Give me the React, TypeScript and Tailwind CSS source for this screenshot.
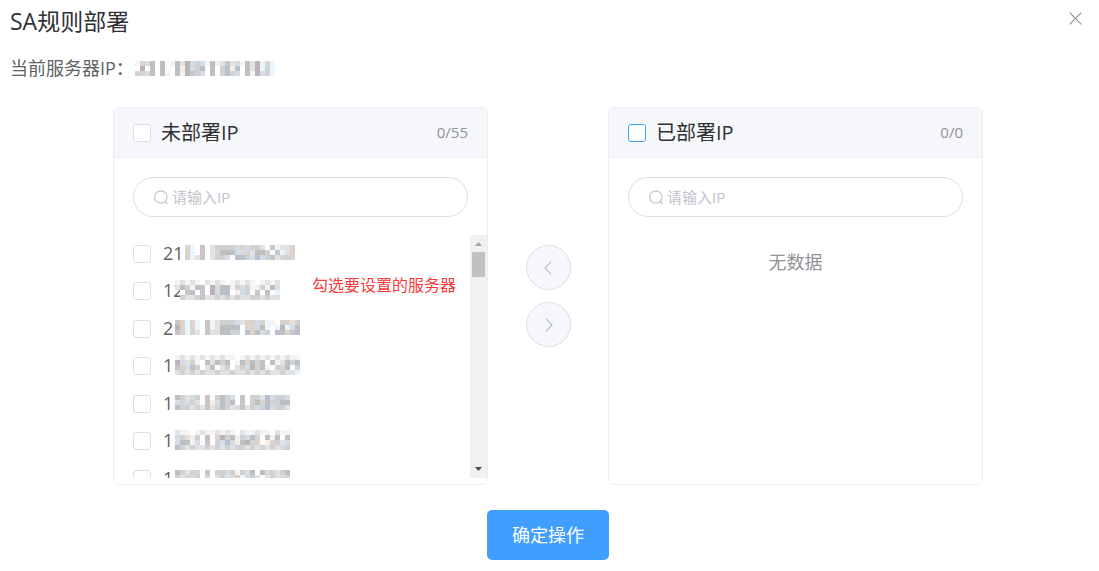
import { useState } from "react";

const shades: Record<string, string> = {
  a: "#f4f4f5",
  b: "#e2e2e3",
  c: "#d0d1d3",
  d: "#bdbfc1",
  p: "#c9c4c8",
  r: "#bcb4b4",
  t: "#dcd4cc",
  o: "#f6eee8",
  s: "#e6f5fe",
  l: "#d3dde7",
  m: "#b9bfcb",
  w: "#ffffff",
};

function Mosaic({ cells }: { cells: string[] }) {
  const width = Math.max(...cells.map((row) => row.length)) * 5;
  const height = cells.length * 5;
  return (
    <svg
      className="shrink-0"
      width={width}
      height={height}
      viewBox={`0 0 ${width} ${height}`}
      shapeRendering="crispEdges"
      aria-hidden="true"
    >
      {cells.flatMap((row, y) =>
        [...row].map((key, x) =>
          key === "." ? null : (
            <rect key={`${x}-${y}`} x={x * 5} y={y * 5} width={5} height={5} fill={shades[key]} />
          ),
        ),
      )}
    </svg>
  );
}

const currentServer = [
  "atldwdwadbrlcladobpbladbrsts",
  "wrwdwdwwdorlcmwdwcmomwdbrscs",
  "ctldwdawdarpclwdwcdclwdarlcs",
];

const servers = [
  { ip: "21", cells: ["..tswpwbccccltlccbwpsbbt", "..tswpwbtdddlltbddcwpsbt", "..tsbpwbcclwdmclmlcpbtct"] },
  { ip: "12", cells: ["ababawbabawababawabab", "bdcadpwrldmaclcaocadb", ".wpmwpwrldmwolcwpwdws", ".cbbcpbbcbcbcbbccbcbb"] },
  { ip: "2", cells: ["ptstswpabccclbtcltsawctbc", "rtstswpabddddwttldswsrsld", "ptstbwpbbdmccwmtdlcwmdtpm"] },
  { ip: "1", cells: ["abababababaawabababababaa", "rlbcawdbdcdwadtdcdwdabdcm", "ptlmcwbdwbcwbclrtdowctmwc", "bcbcbcbbcbbcbbcbcbcbbcbbs"] },
  { ip: "1", cells: ["dcblcwpwcdclwpwccbmlccl", "ltlcbwpoldcdwpwcdtmccdd", "dccbcbpbcdcblpbclcmlccb"] },
  { ip: "1", cells: ["baawabaababawbaabaawbaa", "lcbocwdwtrcdocldtwdadwd", "lddalwpwclmlodrctwotcbl", "dcbcbbcbcbcbccbcbcbcblc"] },
  { ip: "1", cells: ["dcbctwpwcclcacldwdlcbcd", "cbtlcwtwbcbltalcbwbcblt"] },
];

function SearchIcon() {
  return (
    <svg
      className="size-[15px] shrink-0"
      viewBox="0 0 15 15"
      fill="none"
      stroke="currentColor"
      strokeWidth="1.2"
      aria-hidden="true"
    >
      <circle cx="7.8" cy="7" r="6.2" />
      <path d="M12 11.3 14.500 14" />
    </svg>
  );
}

function SearchBox({ label }: { label: string }) {
  return (
    <label className="mx-[19px] mt-[19px] flex h-10 items-center gap-1 rounded-full border border-[#dcdfe6] pl-[19px] pr-4 text-[#c0c4cc]">
      <SearchIcon />
      <input
        type="text"
        aria-label={label}
        placeholder="请输入IP"
        className="min-w-0 flex-1 bg-transparent text-[15px] text-[#606266] outline-none placeholder:text-[#c0c4cc]"
      />
    </label>
  );
}

const box = "size-[18px] shrink-0 appearance-none rounded-[3px] border bg-white checked:border-[#409eff] checked:bg-[#409eff]";

function PanelHeader({ title, count, active = false }: { title: string; count: string; active?: boolean }) {
  return (
    <header className="flex h-[50px] shrink-0 items-center justify-between border-b border-[#ebeef5] bg-[#f5f7fa] px-[19px]">
      <label className="flex items-center gap-[10px] pt-px text-[20px] leading-7 text-[#303133]">
        <input type="checkbox" className={`${box} ${active ? "border-[#409eff]" : "border-[#dcdfe6]"}`} />
        {title}
      </label>
      <span className="text-[15px] text-[#909399]">{count}</span>
    </header>
  );
}

const panel = "flex h-[378px] w-[375px] shrink-0 flex-col overflow-hidden rounded-[5px] border border-[#ebeef5] bg-white";
const round = "flex size-[45px] items-center justify-center rounded-full border border-[#dcdfe6] bg-[#f5f7fa] text-[#c0c4cc]";

export default function App() {
  const [open, setOpen] = useState(true);
  if (!open) return null;

  return (
    <main className="bg-white pb-[11px] pl-[10px] pr-[13px] font-['Open_Sans','Noto_Sans_CJK_SC',sans-serif] text-[#606266]">
      <div className="flex h-[42px] items-center justify-between">
        <h1 className="text-[23px] font-normal leading-8 text-[#303133]">SA规则部署</h1>
        <button type="button" aria-label="关闭" onClick={() => setOpen(false)} className="mb-[6px] mr-1 text-[#909399]">
          <svg
            className="size-[13px]"
            viewBox="0 0 13 13"
            fill="none"
            stroke="currentColor"
            strokeWidth="1.2"
            aria-hidden="true"
          >
            <path d="m.7.7 11.6 11.6M12.3.7.7 12.3" />
          </svg>
        </button>
      </div>

      <div className="flex h-[52px] items-center text-[18px]">
        <span className="w-[125px] whitespace-nowrap">当前服务器IP：</span>
        <Mosaic cells={currentServer} />
      </div>

      <div className="mt-[13px] flex items-center justify-center">
        <section className={panel}>
          <PanelHeader title="未部署IP" count="0/55" />
          <SearchBox label="搜索未部署IP" />
          <div className="relative mb-[6px] mt-[18px] flex min-h-0 flex-1">
            <ul className="flex-1 overflow-hidden">
              {servers.map((server, i) => (
                <li key={i} className="odd:h-[38px] even:h-[37px]">
                  <label className={`flex items-start pl-[19px] text-[18px] leading-4 ${i % 2 ? "pt-[7px]" : "pt-[10px]"}`}>
                    <input type="checkbox" className={`${box} mr-3 border-[#dcdfe6] ${i % 2 ? "mt-[2px]" : ""}`} />
                    <span className={`w-3 ${i % 2 ? "mt-[2px]" : ""}`}>{server.ip}</span>
                    <Mosaic cells={server.cells} />
                  </label>
                </li>
              ))}
            </ul>
            <div className="flex w-[17px] flex-col items-center justify-between bg-[#f1f1f1]" aria-hidden="true">
              <div className="flex flex-col items-center">
                <svg className="h-[17px] w-[17px]" viewBox="0 0 17 17" fill="#a3a3a3">
                  <path d="M5 11h7L8.500 7z" />
                </svg>
                <div className="h-[25px] w-[13px] bg-[#c1c1c1]" />
              </div>
              <svg className="h-[17px] w-[17px]" viewBox="0 0 17 17" fill="#505050">
                <path d="M5 6h7l-3.500 4z" />
              </svg>
            </div>
            <p className="absolute left-[198px] top-[38px] text-[16px] leading-6 text-[#f93a3a]">勾选要设置的服务器</p>
          </div>
        </section>

        <div className="flex w-[120px] flex-col items-center gap-3 pl-[1px]">
          <button type="button" aria-label="移到左侧" className={round}>
            <svg
              className="size-4"
              viewBox="0 0 16 16"
              fill="none"
              stroke="currentColor"
              strokeWidth="1.3"
              aria-hidden="true"
            >
              <path d="M10 1.800 4 8l6 6.200" />
            </svg>
          </button>
          <button type="button" aria-label="移到右侧" className={round}>
            <svg
              className="size-4"
              viewBox="0 0 16 16"
              fill="none"
              stroke="currentColor"
              strokeWidth="1.3"
              aria-hidden="true"
            >
              <path d="m5 1.800 6 6.200-6 6.200" />
            </svg>
          </button>
        </div>

        <section className={panel}>
          <PanelHeader title="已部署IP" count="0/0" active />
          <SearchBox label="搜索已部署IP" />
          <p className="mt-8 text-center text-[18px] leading-[26px] text-[#909399]">无数据</p>
        </section>
      </div>

      <div className="mt-[25px] flex justify-center">
        <button type="button" className="h-[50px] rounded-[5px] bg-[#409eff] px-[25px] text-[18px] text-white">
          确定操作
        </button>
      </div>
    </main>
  );
}
